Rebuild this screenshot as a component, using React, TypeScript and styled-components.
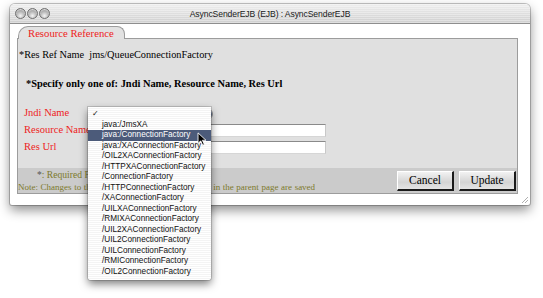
import styled, { createGlobalStyle } from 'styled-components'

const GlobalStyle = createGlobalStyle`
  html, body {
    margin: 0;
    padding: 0;
    background: #fff;
  }
  body {
    width: 543px;
    height: 298px;
    overflow: hidden;
    font-family: "Liberation Serif", "Times New Roman", serif;
  }
`

const menuItems = [
  'java:/JmsXA',
  'java:/ConnectionFactory',
  'java:/XAConnectionFactory',
  '/OIL2XAConnectionFactory',
  '/HTTPXAConnectionFactory',
  '/ConnectionFactory',
  '/HTTPConnectionFactory',
  '/XAConnectionFactory',
  '/UILXAConnectionFactory',
  '/RMIXAConnectionFactory',
  '/UIL2XAConnectionFactory',
  '/UIL2ConnectionFactory',
  '/UILConnectionFactory',
  '/RMIConnectionFactory',
  '/OIL2ConnectionFactory',
]

const App = () => {
  return (
    <Stage>
      <GlobalStyle />
      <Window>
        <TitleBar>
          <Lights>
            <Light />
            <Light />
            <Light />
          </Lights>
          <Title>AsyncSenderEJB (EJB) : AsyncSenderEJB</Title>
          <span />
        </TitleBar>
        <Body>
          <Tab>Resource Reference</Tab>
          <Panel>
            <RefLine>*Res Ref Name&nbsp; jms/QueueConnectionFactory</RefLine>
            <Hint>*Specify only one of: Jndi Name, Resource Name, Res Url</Hint>
            <Form>
              <Label>Jndi Name</Label>
              <Select>
                <SelectEnd />
              </Select>
              <Label>Resource Name</Label>
              <Input />
              <Label>Res Url</Label>
              <Input />
            </Form>
            <Footer>
              <Notes>
                <Required>
                  <Star>*</Star>: Required Field
                </Required>
                <Note>Note: Changes to this page take effect when changes in the parent page are saved</Note>
              </Notes>
              <Buttons>
                <Button>Cancel</Button>
                <Button>Update</Button>
              </Buttons>
            </Footer>
          </Panel>
        </Body>
        <Grip viewBox="0 0 10 10">
          <path d="M9 3 L3 9 M9 6 L6 9" stroke="#9a9a9a" strokeWidth="0.8" />
        </Grip>
      </Window>

      <Menu>
        <MenuRow>
          <Check>✓</Check>
        </MenuRow>
        {menuItems.map((item, i) => (
          <MenuRow key={item} $active={i === 1}>
            {item}
          </MenuRow>
        ))}
      </Menu>

      <Cursor viewBox="0 0 11 17">
        <path
          d="M1 1 L1 13 L4 10 L6.3 15 L8.2 14.2 L6 9.4 L10 9.4 Z"
          fill="#000"
          stroke="#fff"
          strokeWidth="1"
          strokeLinejoin="round"
        />
      </Cursor>
    </Stage>
  )
}

const Stage = styled.div`
  position: relative;
  width: 543px;
  height: 298px;
  padding: 4px 0 0 10px;
  box-sizing: border-box;
`

const Window = styled.div`
  position: relative;
  width: 520px;
  height: 201px;
  background: #fff;
  border-radius: 5px 5px 2px 2px;
  box-shadow: 0 5px 12px rgba(0, 0, 0, 0.45), 0 0 0 1px rgba(0, 0, 0, 0.22);
  display: flex;
  flex-direction: column;
  overflow: hidden;
`

const TitleBar = styled.div`
  height: 19px;
  flex: none;
  display: grid;
  grid-template-columns: 1fr auto 1fr;
  align-items: center;
  background:
    repeating-linear-gradient(180deg, rgba(255, 255, 255, 0.35) 0 1px, rgba(0, 0, 0, 0) 1px 2px),
    linear-gradient(180deg, #eeeeee, #cfcfcf);
  border-bottom: 1px solid #8e8e8e;
`

const Lights = styled.div`
  display: flex;
  gap: 1px;
  padding-left: 5px;
`

const Light = styled.span`
  width: 11px;
  height: 11px;
  border-radius: 50%;
  box-sizing: border-box;
  border: 1px solid #6f6f6f;
  background: radial-gradient(circle at 50% 75%, #f4f4f4 0, #bdbdbd 45%, #7d7d7d 100%);
  box-shadow: inset 0 1px 1px rgba(255, 255, 255, 0.7);
`

const Title = styled.div`
  font-family: "Liberation Sans", Arial, sans-serif;
  font-size: 8.6px;
  letter-spacing: -0.1px;
  color: #1a1a1a;
`

const Body = styled.div`
  flex: 1;
  padding: 2px 12px 0 7px;
  display: flex;
  flex-direction: column;
  align-items: flex-start;
`

const Tab = styled.div`
  position: relative;
  z-index: 1;
  margin-left: 1px;
  margin-bottom: -1px;
  height: 12px;
  padding: 0 10px 0 9px;
  background: #e2e2e2;
  border: 1px solid #9c9c9c;
  border-bottom: none;
  border-radius: 10px 8px 0 0;
  color: #ee1d1d;
  font-size: 10.7px;
  line-height: 13px;
`

const Panel = styled.div`
  align-self: stretch;
  height: 156px;
  box-sizing: border-box;
  border: 1px solid #9c9c9c;
  background: #e0e0e0;
  display: flex;
  flex-direction: column;
`

const RefLine = styled.div`
  margin: 9px 0 0 1px;
  font-size: 10.3px;
  line-height: 14px;
  color: #000;
`

const Hint = styled.div`
  margin: 15px 0 0 8px;
  font-size: 10.4px;
  font-weight: bold;
  line-height: 14px;
  color: #000;
`

const Form = styled.div`
  margin: 16px 0 0 6px;
  display: grid;
  grid-template-columns: 76px 226px;
  grid-auto-rows: 13px;
  row-gap: 4px;
  align-items: center;
`

const Label = styled.div`
  color: #ee1d1d;
  font-size: 10.5px;
  line-height: 13px;
  margin-top: -2px;
  white-space: nowrap;
`

const Select = styled.div`
  width: 113px;
  height: 12px;
  border-radius: 6px;
  background: #fff;
  border: 1px solid #8d8d8d;
  box-sizing: border-box;
  position: relative;
  overflow: hidden;
`

const SelectEnd = styled.span`
  position: absolute;
  right: 0;
  top: 0;
  bottom: 0;
  width: 12px;
  background: linear-gradient(180deg, #8797b4, #3d4d6c);
`

const Input = styled.div`
  height: 13px;
  box-sizing: border-box;
  background: #fff;
  border: 1px solid #8a8a8a;
  border-right-color: #c8c8c8;
  border-bottom-color: #d6d6d6;
`

const Footer = styled.div`
  margin-top: auto;
  height: 25px;
  background: #cbcbcb;
  display: flex;
  align-items: center;
  justify-content: space-between;
`

const Notes = styled.div`
  display: flex;
  flex-direction: column;
  color: #7d7a2c;
  font-size: 9px;
  line-height: 12px;
  white-space: nowrap;
  overflow: hidden;
`

const Required = styled.div`
  padding-left: 19px;
  font-size: 9.6px;
`

const Star = styled.span`
  color: #555;
`

const Note = styled.div`
  word-spacing: 0.35px;
`

const Buttons = styled.div`
  display: flex;
  gap: 5px;
  flex: none;
  padding-right: 1px;
`

const Button = styled.button`
  width: 57px;
  height: 20px;
  padding: 0;
  font-family: "Liberation Serif", "Times New Roman", serif;
  font-size: 11.5px;
  color: #000;
  background: linear-gradient(180deg, #f2f2f2, #d4d4d4 60%, #e4e4e4);
  border: 1px solid #fff;
  border-right: 2px solid #1a1a1a;
  border-bottom: 2px solid #1a1a1a;
`

const Grip = styled.svg`
  position: absolute;
  right: 1px;
  bottom: 1px;
  width: 10px;
  height: 10px;
`

const Menu = styled.div`
  position: absolute;
  left: 88px;
  top: 107px;
  width: 123px;
  padding: 2px 0 3px;
  box-sizing: border-box;
  background: repeating-linear-gradient(180deg, #ffffff 0 1px, #f4f4f4 1px 2px);
  box-shadow: 0 4px 9px rgba(0, 0, 0, 0.5), 0 0 0 1px rgba(0, 0, 0, 0.15);
  border-radius: 0 0 3px 3px;
  font-family: "Liberation Sans", Arial, sans-serif;
  font-size: 8.2px;
`

const MenuRow = styled.div<{ $active?: boolean }>`
  height: 10.5px;
  line-height: 10.5px;
  padding-left: 14px;
  position: relative;
  white-space: nowrap;
  color: ${p => (p.$active ? '#fff' : '#111')};
  background: ${p => (p.$active ? '#4c5b7a' : 'transparent')};
`

const Check = styled.span`
  position: absolute;
  left: 4px;
  top: 0;
  font-size: 8px;
  font-family: "DejaVu Sans", sans-serif;
`

const Cursor = styled.svg`
  position: absolute;
  left: 197px;
  top: 132px;
  width: 10px;
  height: 15px;
`

export default App
